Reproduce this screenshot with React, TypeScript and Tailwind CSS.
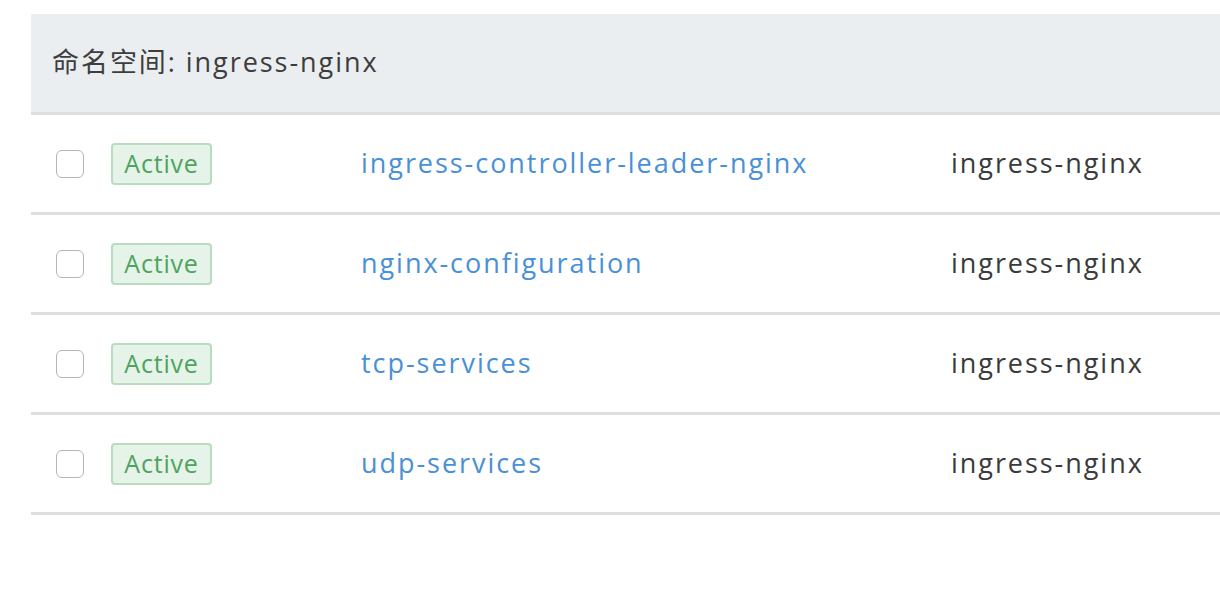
const rows = [
  "ingress-controller-leader-nginx",
  "nginx-configuration",
  "tcp-services",
  "udp-services",
];

export default function App() {
  return (
    <div className="h-[602px] w-[1220px] overflow-hidden bg-white pt-[14px] pl-[31px] font-['Open_Sans','Noto_Sans_CJK_SC',sans-serif] text-[27px] tracking-[1.95px]">
      <div className="w-[1250px]">
        <div className="flex h-[101px] items-center border-b-[3px] border-[#dcdee0] bg-[#ebeef0] pl-[21px] pb-[2px] text-[#3d3d3d]">
          命名空间: ingress-nginx
        </div>
        {rows.map((name) => (
          <div
            key={name}
            className="grid h-[100px] grid-cols-[80px_250px_590px_1fr] items-center border-b-[3px] border-[#dcdee0]"
          >
            <div className="pl-[25px]">
              <div className="h-[28px] w-[28px] rounded-[6px] border border-[#b5b5b5] bg-white" />
            </div>
            <div>
              <span className="inline-flex h-[42px] w-[101px] items-center justify-center rounded-[4px] border-2 border-[#b7dcc0] bg-[#e5f3e8] text-[25px] tracking-[0.8px] text-[#4ea35f]">
                Active
              </span>
            </div>
            <a href="#" className="text-[#4a90d6]">
              {name}
            </a>
            <div className="text-[#3b3b3b]">ingress-nginx</div>
          </div>
        ))}
      </div>
    </div>
  );
}
